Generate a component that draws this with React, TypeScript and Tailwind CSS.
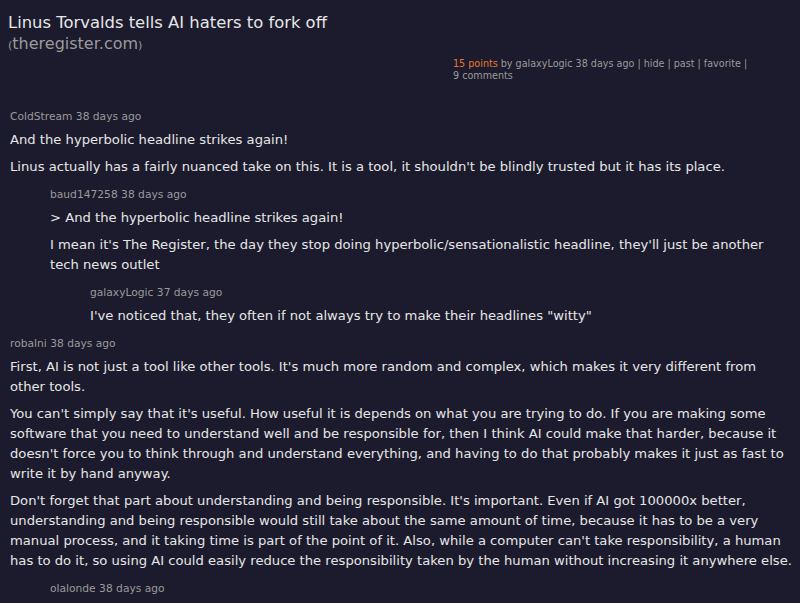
import React from 'react'

type Comment = {
    user: string
    age: string
    depth: number
    paragraphs: string[]
}

const comments: Comment[] = [
    {
        user: 'ColdStream',
        age: '38 days ago',
        depth: 0,
        paragraphs: [
            'And the hyperbolic headline strikes again!',
            "Linus actually has a fairly nuanced take on this. It is a tool, it shouldn't be blindly trusted but it has its place.",
        ],
    },
    {
        user: 'baud147258',
        age: '38 days ago',
        depth: 1,
        paragraphs: [
            '> And the hyperbolic headline strikes again!',
            "I mean it's The Register, the day they stop doing hyperbolic/sensationalistic headline, they'll just be another tech news outlet",
        ],
    },
    {
        user: 'galaxyLogic',
        age: '37 days ago',
        depth: 2,
        paragraphs: ['I\'ve noticed that, they often if not always try to make their headlines "witty"'],
    },
    {
        user: 'robalni',
        age: '38 days ago',
        depth: 0,
        paragraphs: [
            "First, AI is not just a tool like other tools. It's much more random and complex, which makes it very different from other tools.",
            "You can't simply say that it's useful. How useful it is depends on what you are trying to do. If you are making some software that you need to understand well and be responsible for, then I think AI could make that harder, because it doesn't force you to think through and understand everything, and having to do that probably makes it just as fast to write it by hand anyway.",
            "Don't forget that part about understanding and being responsible. It's important. Even if AI got 100000x better, understanding and being responsible would still take about the same amount of time, because it has to be a very manual process, and it taking time is part of the point of it. Also, while a computer can't take responsibility, a human has to do it, so using AI could easily reduce the responsibility taken by the human without increasing it anywhere else.",
        ],
    },
    {
        user: 'olalonde',
        age: '38 days ago',
        depth: 1,
        paragraphs: [],
    },
]

const indent = ['pl-[10px]', 'pl-[50px]', 'pl-[90px]']

function CommentItem({ c }: { c: Comment }) {
    return (
        <div className={`${indent[c.depth]} pr-[5px] mt-[11px]`}>
            <div className="text-[10.7px] text-[#9a9a9a] leading-[14px]">
                {c.user} {c.age}
            </div>
            {c.paragraphs.map((p, i) => (
                <p key={i} className="mt-[7px] first-of-type:mt-[6px] text-[13.15px] leading-[20px] text-[#e6e6e6]">
                    {p}
                </p>
            ))}
        </div>
    )
}

export default function App() {
    return (
        <div className="min-h-screen bg-[#1c1b2d] overflow-hidden font-['DejaVu_Sans',Verdana,sans-serif]">
            <div className="pl-[8px] pt-[12px]">
                <h1 className="text-[16.4px] leading-[22px] text-[#e6e6e6]">
                    Linus Torvalds tells AI haters to fork off
                </h1>
                <div className="text-[#9a9a9a] leading-[20px]">
                    <span className="text-[11px]">(</span>
                    <span className="text-[16px]">theregister.com</span>
                    <span className="text-[11px]">)</span>
                </div>
            </div>
            <div className="flex justify-end pr-[51px] mt-[2px]">
                <div className="w-[296px] text-[9.6px] leading-[12px] text-[#9a9a9a]">
                    <span className="text-[#e8772e]">15 points</span> by galaxyLogic 38 days ago | hide | past |
                    favorite | 9 comments
                </div>
            </div>
            <div className="mt-[28px]">
                {comments.map((c, i) => (
                    <CommentItem key={i} c={c} />
                ))}
            </div>
        </div>
    )
}
